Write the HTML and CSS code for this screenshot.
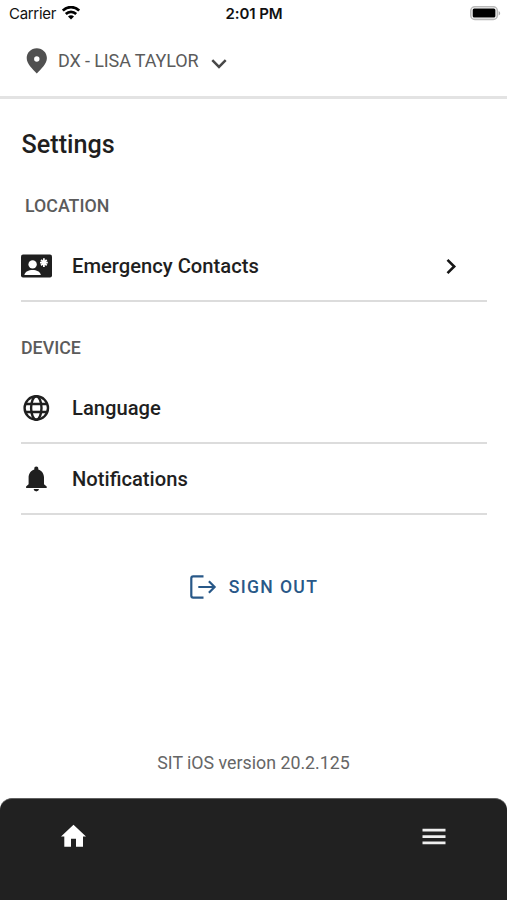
FILE: index.html
```html
<!DOCTYPE html>
<html lang="en">
<head>
<meta charset="utf-8">
<title>Settings</title>
<link rel="stylesheet" href="styles.css">
</head>
<body>
<div class="status">
  <div class="carrier">
    <span>Carrier</span>
    <svg width="18" height="14" viewBox="0 0 18 14"><g fill="none" stroke="#000" stroke-width="2.6"><path d="M.8 4.600C5.400-.1 12.600-.1 17.200 4.600"/><path d="M3.800 8c2.900-2.900 7.500-2.900 10.400 0"/></g><path d="M6 10.400c1.700-1.600 4.300-1.600 6 0l-3 3z"/></svg>
  </div>
  <div class="time">2:01 PM</div>
  <svg class="battery" width="32" height="15" viewBox="0 0 32 15"><rect x=".8" y=".8" width="26.500" height="12.600" rx="4" fill="#fff" stroke="#b9b9b9" stroke-width="1.600"/><rect x="2.700" y="2.600" width="22.700" height="9" rx="1.500"/><path d="M28.700 5c2 .8 2 3.600 0 4.400z" fill="#aaa"/></svg>
</div>
<header class="site">
  <svg class="pin" width="22" height="26" viewBox="0 0 22 26"><path fill="#505050" fill-rule="evenodd" d="M10.800.2C5 .2.700 4.600.700 10.100c0 6.200 5.700 10.700 10.100 15.400C15.200 20.800 20.900 16.300 20.900 10.100 20.900 4.600 16.600.2 10.800.2zm0 8.100a2.700 2.700 0 1 1 0 5.400 2.700 2.700 0 0 1 0-5.400z"/></svg>
  <span class="site-name">DX - LISA TAYLOR</span>
  <svg class="down" width="16" height="10" viewBox="0 0 16 10"><path d="M1.300 1.200L8 7.900l6.700-6.700" fill="none" stroke="#484848" stroke-width="2.500"/></svg>
</header>
<main>
  <h1>Settings</h1>
  <section>
    <h2 class="location">LOCATION</h2>
    <div class="row">
      <svg class="icon" width="31" height="24" viewBox="0 0 31 24"><rect y=".5" width="31" height="23" rx="2" fill="#1f1f1f"/><circle cx="11.600" cy="10.400" r="4.200" fill="#fff"/><path d="M3.300 20.900c1-3.500 4.200-4.900 8.300-4.900s7.300 1.400 8.300 4.900z" fill="#fff"/><path d="M22.900 4.300v8.600M19 8.600h7.800M20.100 5.800l5.600 5.600M20.100 11.400l5.600-5.600" stroke="#fff" stroke-width="1.800"/></svg>
      <span class="label">Emergency Contacts</span>
      <svg class="next" width="11" height="17" viewBox="0 0 11 17"><path d="M1.500 1.800L8.200 8.500l-6.700 6.700" fill="none" stroke="#161616" stroke-width="2.600"/></svg>
    </div>
  </section>
  <section>
    <h2 class="device">DEVICE</h2>
    <div class="row">
      <svg class="icon" width="31" height="26" viewBox="0 0 31 26"><g fill="none" stroke="#1f1f1f" stroke-width="2.400"><circle cx="15.300" cy="13" r="11.700"/><ellipse cx="15.300" cy="13" rx="5.200" ry="11.700"/><path d="M4.500 9h21.600M4.500 17h21.600"/></g></svg>
      <span class="label">Language</span>
    </div>
    <div class="row">
      <svg class="icon" width="31" height="26" viewBox="0 0 31 26"><path d="M15.300.6c-1.300 0-2 .9-2 2v.8C9.700 4.500 7.600 7.700 7.600 11.500v6.700l-2.500 2.400v1.300h20.600v-1.300L23 18.200v-6.700c0-3.800-2.100-7-5.700-8.100v-.8c0-1.100-.7-2-2-2zM12.700 23.100h5.200c-.1 1.300-1.200 2.300-2.600 2.300s-2.500-1-2.600-2.300z" fill="#1f1f1f"/></svg>
      <span class="label">Notifications</span>
    </div>
  </section>
  <div class="signout">
    <svg width="27" height="24" viewBox="0 0 27 24"><g fill="none" stroke="#285888" stroke-width="2.200"><path d="M13.500 1.300H3.200Q1.300 1.300 1.300 3.200v17.600q0 1.900 1.900 1.900H13.500"/><path d="M8.300 12h16.300M18.900 6.300l5.700 5.700-5.700 5.700"/></g></svg>
    <span>SIGN OUT</span>
  </div>
  <p class="version">SIT iOS version 20.2.125</p>
</main>
<nav>
  <svg width="26" height="24" viewBox="0 0 26 24"><path d="M12.500.8L0 12.500h3.300v10.200h6.700v-8h5v8h7V12.500H25z" fill="#fff"/></svg>
  <svg class="menu" width="24" height="18" viewBox="0 0 24 18"><path d="M.5 2.200h23M.5 8.700h23M.5 14.900h23" stroke="#efefef" stroke-width="2.700"/></svg>
</nav>
</body>
</html>
```
FILE: styles.css
```css
* { box-sizing: border-box; }
body {
  margin: 0;
  height: 900px;
  display: flex;
  flex-direction: column;
  background: #fff;
  color: #1f1f1f;
  font-family: Roboto, "Liberation Sans", sans-serif;
  overflow: hidden;
}
svg { display: block; flex: none; }
span, .time, .version { white-space: nowrap; }
.status {
  height: 28px;
  display: grid;
  grid-template-columns: 1fr auto 1fr;
  align-items: center;
  padding: 0 5px 0 9px;
  color: #111;
  font: 15px/28px Inter, sans-serif;
}
.carrier { display: flex; align-items: center; gap: 6px; letter-spacing: -.3px; }
.carrier svg { margin-bottom: 2px; }
.time { margin-left: -3px; font-weight: 600; letter-spacing: -.1px; }
.battery { justify-self: end; margin-bottom: 1px; }
.site {
  height: 71px;
  padding: 0 0 3px 26px;
  display: flex;
  align-items: center;
  border-bottom: 3px solid #e3e3e3;
  color: #5b5b5b;
}
.site-name { margin-left: 10px; font-size: 18px; letter-spacing: -.12px; }
.down { margin: 6px 0 0 13px; }
main { flex: 1; padding: 0 20px 0 21px; }
h1 { margin: 30px 0 0 .5px; font-size: 25.2px; line-height: 32px; font-weight: 500; }
h2 { font-size: 17.8px; line-height: 24px; font-weight: 500; color: #5b5b5b; }
.location { margin: 33px 0 13px 4px; }
.device { margin: 34px 0 13px; }
.row {
  height: 71px;
  display: flex;
  align-items: center;
  border-bottom: 2px solid #dcdcdc;
}
.label { margin-left: 20px; font-size: 20.2px; line-height: 28px; font-weight: 500; }
.next { margin: 1px 30px 0 auto; }
.signout {
  margin-top: 59px;
  height: 26px;
  display: flex;
  align-items: center;
  justify-content: center;
  gap: 12px;
  color: #285888;
  font-size: 17.6px;
  font-weight: 500;
  letter-spacing: 1.35px;
}
.version { margin: 151px 0 0 -1px; text-align: center; font-size: 17.8px; line-height: 24px; color: #666; }
nav {
  height: 102px;
  padding: 25px 61px 0;
  display: flex;
  justify-content: space-between;
  background: #212121;
  border-top: 1px solid #606060;
  border-radius: 12px 12px 0 0;
}
.menu { margin-top: 4px; }
```
